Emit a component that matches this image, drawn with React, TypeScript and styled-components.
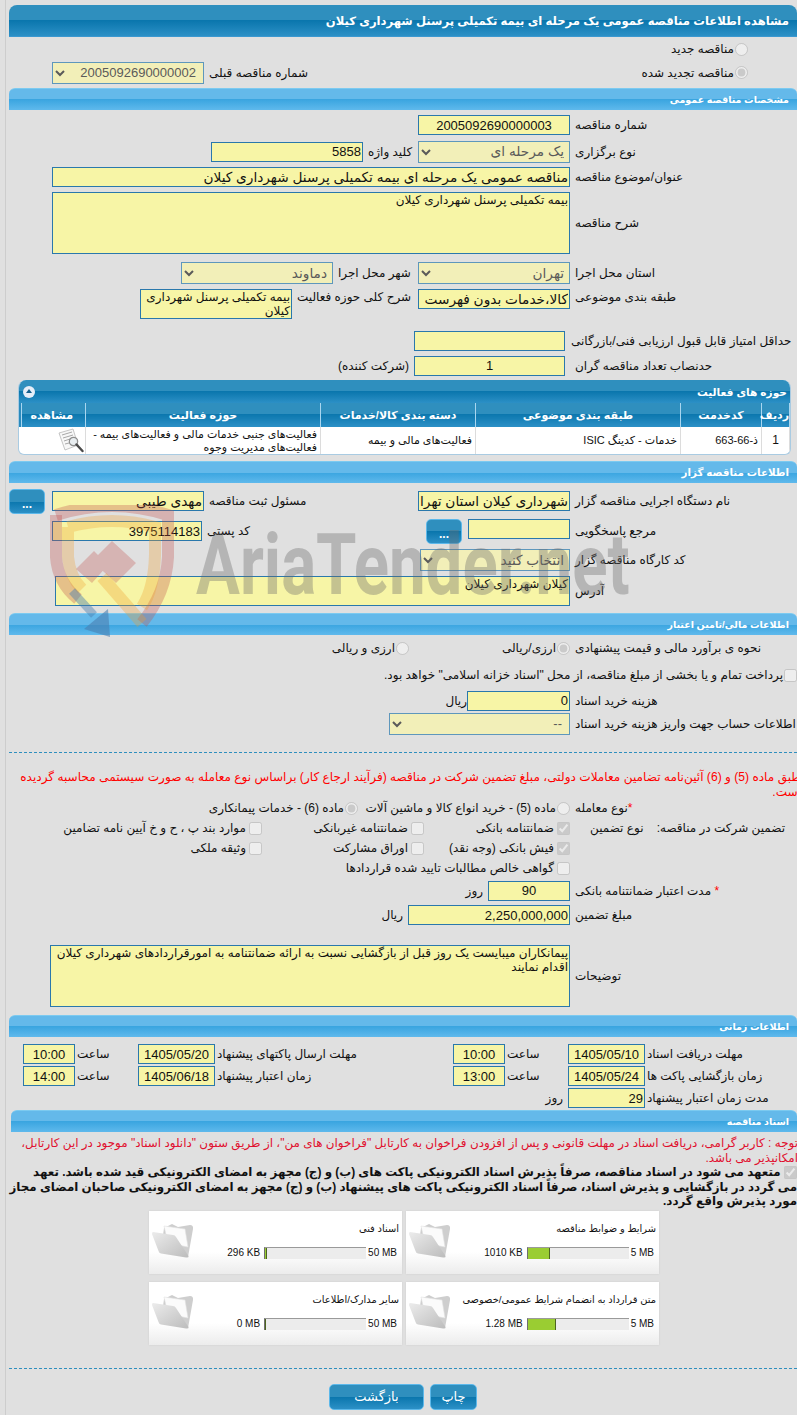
import { FC, ReactNode } from 'react';
import styled, { createGlobalStyle } from 'styled-components';

const FONT = '"Liberation Sans", "DejaVu Sans", sans-serif';
const INPUT_BORDER = '#2a78ac';
const INPUT_BG = '#f7f5a6';
const SELECT_BG = '#f2efb8';

const GlobalStyle = createGlobalStyle`
  html, body {
    margin: 0;
    background: #e0e0e0;
    font-family: ${FONT};
    font-size: 12px;
    color: #111;
  }
`;

const files = [
  { title: 'شرایط و ضوابط مناقصه', used: '1010 KB', total: '5 MB', pct: 21 },
  { title: 'اسناد فنی', used: '296 KB', total: '50 MB', pct: 1 },
  { title: 'متن قرارداد به انضمام شرایط عمومی/خصوصی', used: '1.28 MB', total: '5 MB', pct: 27 },
  { title: 'سایر مدارک/اطلاعات', used: '0 MB', total: '50 MB', pct: 0 },
];

const FolderIcon: FC = () => (
  <svg width="42" height="36" viewBox="0 0 42 36">
    <defs>
      <linearGradient id="flap" x1="0" y1="0" x2="1" y2="1">
        <stop offset="0" stopColor="#ececec" />
        <stop offset="1" stopColor="#bcbcbc" />
      </linearGradient>
    </defs>
    <path d="M12 5 L20 1 L26 4 L38 2 Q41.500 2 41 6 L36 34 L10 20 Z" fill="#cecece" />
    <path d="M12 3 L33 6 L36 24 L16 20 Z" fill="#fbfbfb" stroke="#e2e2e2" strokeWidth="0.6" />
    <path d="M1 9 L21 12 Q23 12 24 14 L36.500 33 Q37 35 34 34.500 L9 30.500 Q7 30 6.500 28 L0 11 Q0 9 1 9 Z" fill="url(#flap)" />
  </svg>
);

const ReviewIcon: FC = () => (
  <svg width="26" height="25" viewBox="0 0 26 25">
    <path d="M1 5 L15 1 L20 17 L7 22 Z" fill="#f7f7f7" stroke="#b8b8b8" strokeWidth="0.8" />
    <path d="M4 7 L14 4 M5 10 L15 7 M6 13 L12 11 M7 16 L11 15" stroke="#a8a8a8" strokeWidth="1" />
    <circle cx="15.500" cy="13.500" r="4.200" fill="#e4eaee" fillOpacity="0.8" stroke="#8e8e8e" strokeWidth="1.200" />
    <path d="M18.500 16.500 L24.500 23" stroke="#4a4a4a" strokeWidth="2.400" strokeLinecap="round" />
  </svg>
);

const WatermarkLogo: FC = () => (
  <svg width="130" height="135" viewBox="0 0 130 135">
    <path d="M6 10 Q62 -8 118 10 L118 52 Q116 88 92 118" fill="none" stroke="#c0504d" strokeOpacity="0.32" strokeWidth="12" />
    <path d="M6 10 L6 52 Q8 78 28 94" fill="none" stroke="#c0504d" strokeOpacity="0.32" strokeWidth="12" />
    <path d="M18 22 L18 52 Q20 72 32 84 M18 22 Q62 10 105 22 L105 50 Q104 84 92 102" fill="none" stroke="#f0a030" strokeOpacity="0.3" strokeWidth="12" />
    <path d="M62 36 L86 58 L66 78 L42 56 Z M26 64 L44 46 L58 60 L42 78 Z" fill="#c0504d" fillOpacity="0.3" />
    <path d="M52 72 L92 118" stroke="#f0a030" strokeOpacity="0.32" strokeWidth="12" />
    <path d="M22 86 L44 110" stroke="#4a7fb0" strokeOpacity="0.45" strokeWidth="8" />
    <path d="M58 104 L60 132 L34 124 Z" fill="#4a7fb0" fillOpacity="0.6" />
  </svg>
);

const Field: FC<{ label: ReactNode; w?: number; children: ReactNode }> = ({ label, w = 222, children }) => (
  <>
    <Label $w={w}>{label}</Label>
    {children}
  </>
);

const Check: FC<{ checked?: boolean; children: ReactNode; w?: number; gap?: number }> = ({ checked, children, w, gap }) => (
  <CheckItem $w={w} $gap={gap}>
    <input type="checkbox" disabled defaultChecked={checked} />
    <span>{children}</span>
  </CheckItem>
);

const Choice: FC<{ name: string; checked?: boolean; children: ReactNode; w?: number }> = ({ name, checked, children, w }) => (
  <RadioItem $w={w}>
    <input type="radio" name={name} disabled defaultChecked={checked} />
    <span>{children}</span>
  </RadioItem>
);

const FileCard: FC<{ title: string; used: string; total: string; pct: number }> = ({ title, used, total, pct }) => (
  <Card>
    <CardBody>
      <CardTitle>{title}</CardTitle>
      <Meter>
        <MeterText>{total}</MeterText>
        <MeterTrack>
          <MeterFill style={{ width: `${pct}%` }} />
        </MeterTrack>
        <MeterText>{used}</MeterText>
      </Meter>
    </CardBody>
    <FolderSlot>
      <FolderIcon />
    </FolderSlot>
  </Card>
);

export default function App() {
  return (
    <Page>
      <GlobalStyle />
      <Watermark>
        <WatermarkLogo />
        <WatermarkText>AriaTender.net</WatermarkText>
      </Watermark>

      <PageTitle>مشاهده اطلاعات مناقصه عمومی یک مرحله ای بیمه تکمیلی پرسنل شهرداری کیلان</PageTitle>

      <Row $h={24} $pr={49}>
        <Choice name="renew">مناقصه جدید</Choice>
      </Row>
      <Row $h={23} $pr={49}>
        <Choice name="renew" checked w={439}>مناقصه تجدید شده</Choice>
        <Label $w={100}>شماره مناقصه قبلی</Label>
        <Select $w={152} $num defaultValue="a">
          <option value="a">2005092690000002</option>
        </Select>
      </Row>

      <Bar $mt={4}>مشخصات مناقصه عمومی</Bar>

      <Row $h={30}>
        <Field label="شماره مناقصه">
          <TextInput $w={152} $num $center readOnly defaultValue="2005092690000003" />
        </Field>
      </Row>
      <Row $h={23}>
        <Field label="نوع برگزاری">
          <Select $w={152} defaultValue="a">
            <option value="a">یک مرحله ای</option>
          </Select>
        </Field>
        <Field label="کلید واژه" w={50}>
          <TextInput $w={152} $num readOnly defaultValue="5858" />
        </Field>
      </Row>
      <Row $h={28}>
        <Field label="عنوان/موضوع مناقصه">
          <TextInput $w={518} readOnly defaultValue="مناقصه عمومی یک مرحله ای بیمه تکمیلی پرسنل شهرداری کیلان" />
        </Field>
      </Row>
      <Row $h={64}>
        <Field label="شرح مناقصه">
          <TextArea $w={518} $h={62} readOnly defaultValue="بیمه تکمیلی پرسنل شهرداری کیلان" />
        </Field>
      </Row>
      <Row $h={34} $pt={2}>
        <Field label="استان محل اجرا">
          <Select $w={152} defaultValue="a">
            <option value="a">تهران</option>
          </Select>
        </Field>
        <Field label="شهر محل اجرا" w={80}>
          <Select $w={152} defaultValue="a">
            <option value="a">دماوند</option>
          </Select>
        </Field>
      </Row>
      <Row $h={38} $top>
        <Field label="طبقه بندی موضوعی">
          <TextInput $w={152} readOnly defaultValue="کالا،خدمات بدون فهرست بها" />
        </Field>
        <Field label="شرح کلی حوزه فعالیت" w={121}>
          <TextArea $w={152} $h={30} readOnly defaultValue="بیمه تکمیلی پرسنل شهرداری کیلان" />
        </Field>
      </Row>
      <Row $h={27}>
        <Label $w={226} $ml={6}>حداقل امتیاز قابل قبول ارزیابی فنی/بازرگانی</Label>
        <TextInput $w={151} readOnly />
      </Row>
      <Row $h={23}>
        <Label $w={222} $ml={10}>حدنصاب تعداد مناقصه گران</Label>
        <TextInput $w={151} $num $center readOnly defaultValue="1" />
        <Suffix>(شرکت کننده)</Suffix>
      </Row>

      <Panel>
        <PanelBar>
          <span>حوزه های فعالیت</span>
          <Toggle />
        </PanelBar>
        <DataTable>
          <colgroup>
            <col width={28} />
            <col width={81} />
            <col width={205} />
            <col width={155} />
            <col width={235} />
            <col width={67} />
          </colgroup>
          <thead>
            <tr>
              <th>ردیف</th>
              <th>کدخدمت</th>
              <th>طبقه بندی موضوعی</th>
              <th>دسته بندی کالا/خدمات</th>
              <th>حوزه فعالیت</th>
              <th>مشاهده</th>
            </tr>
          </thead>
          <tbody>
            <tr>
              <CenterCell>1</CenterCell>
              <td>ذ-66-663</td>
              <td>خدمات - کدینگ ISIC</td>
              <td>فعالیت‌های مالی و بیمه</td>
              <td>فعالیت‌های جنبی خدمات مالی و فعالیت‌های بیمه - فعالیت‌های مدیریت وجوه</td>
              <IconCell>
                <ReviewIcon />
              </IconCell>
            </tr>
          </tbody>
        </DataTable>
      </Panel>

      <Bar $mt={6} $fs={10.300}>اطلاعات مناقصه گزار</Bar>

      <Row $h={34} $pt={2}>
        <Field label="نام دستگاه اجرایی مناقصه گزار">
          <TextInput $w={152} readOnly defaultValue="شهرداری کیلان استان تهران" />
        </Field>
        <Field label="مسئول ثبت مناقصه" w={209}>
          <TextInput $w={152} readOnly defaultValue="مهدی طیبی" />
        </Field>
        <SmallButton $mr={7}>...</SmallButton>
      </Row>
      <Row $h={28}>
        <Field label="مرجع پاسخگویی">
          <RefInput $w={102} readOnly />
        </Field>
        <SmallButton $mr={6}>...</SmallButton>
        <Label $w={219}>کد پستی</Label>
        <TextInput $w={150} $num readOnly defaultValue="3975114183" />
      </Row>
      <Row $h={30}>
        <Field label="کد کارگاه مناقصه گزار">
          <Select $w={150} defaultValue="a">
            <option value="a">انتخاب کنید</option>
          </Select>
        </Field>
      </Row>
      <Row $h={32}>
        <Field label="آدرس">
          <TextArea $w={515} $h={30} readOnly defaultValue="کیلان شهرداری کیلان" />
        </Field>
      </Row>

      <Bar $mt={6}>اطلاعات مالی/تامین اعتبار</Bar>

      <Row $h={26}>
        <Field label="نحوه ی برآورد مالی و قیمت پیشنهادی">
          <Choice name="estimate" checked w={161}>ارزی/ریالی</Choice>
          <Choice name="estimate">ارزی و ریالی</Choice>
        </Field>
      </Row>
      <Row $h={28}>
        <Check gap={1}>پرداخت تمام و یا بخشی از مبلغ مناقصه، از محل "اسناد خزانه اسلامی" خواهد بود.</Check>
      </Row>
      <Row $h={23}>
        <Field label="هزینه خرید اسناد">
          <TextInput $w={103} $num readOnly defaultValue="0" />
        </Field>
        <Suffix $gap={0}>ریال</Suffix>
      </Row>
      <Row $h={23}>
        <Field label="اطلاعات حساب جهت واریز هزینه خرید اسناد">
          <Select $w={181} $num defaultValue="a">
            <option value="a">--</option>
          </Select>
        </Field>
      </Row>

      <Divider $mt={17} />

      <RedNote $mt={17} $mr={-4} $fs={12.100}>
        <Line>طبق ماده (5) و (6) آئین‌نامه تضامین معاملات دولتی، مبلغ تضمین شرکت در مناقصه (فرآیند ارجاع کار) براساس نوع معامله به صورت سیستمی محاسبه گردیده</Line>
        <Line>است.</Line>
      </RedNote>

      <Row $h={20}>
        <Field label={<><Star>*</Star><span>نوع معامله</span></>}>
          <Choice name="deal" w={212}>ماده (5) - خرید انواع کالا و ماشین آلات</Choice>
          <Choice name="deal" checked>ماده (6) - خدمات پیمانکاری</Choice>
        </Field>
      </Row>
      <Row $h={20}>
        <GuaranteeHead>
          <span>تضمین شرکت در مناقصه:</span>
          <span>نوع تضمین</span>
        </GuaranteeHead>
        <Check checked w={146}>ضمانتنامه بانکی</Check>
        <Check w={162}>ضمانتنامه غیربانکی</Check>
        <Check>موارد بند پ ، ح و خ آیین نامه تضامین</Check>
      </Row>
      <Row $h={20}>
        <GuaranteeHead />
        <Check checked w={146}>فیش بانکی (وجه نقد)</Check>
        <Check w={162}>اوراق مشارکت</Check>
        <Check>وثیقه ملکی</Check>
      </Row>
      <Row $h={20}>
        <GuaranteeHead />
        <Check>گواهی خالص مطالبات تایید شده قراردادها</Check>
      </Row>
      <Row $h={25}>
        <Field label={<><Star>*</Star> <span>مدت اعتبار ضمانتنامه بانکی</span></>}>
          <TextInput $w={82} $num $center readOnly defaultValue="90" />
        </Field>
        <Suffix>روز</Suffix>
      </Row>
      <Row $h={24}>
        <Field label="مبلغ تضمین">
          <TextInput $w={162} $num readOnly defaultValue="2,250,000,000" />
        </Field>
        <Suffix>ریال</Suffix>
      </Row>
      <Row $h={88} $pt={18} $pb={8}>
        <Field label="توضیحات">
          <TextArea $w={520} $h={62} readOnly defaultValue="پیمانکاران میبایست یک روز قبل از بازگشایی نسبت به ارائه ضمانتنامه به امورقراردادهای شهرداری کیلان اقدام نمایند" />
        </Field>
      </Row>

      <Bar>اطلاعات زمانی</Bar>

      <TimeRows>
        <Row $h={22}>
          <Label $w={150} $ml={2}>مهلت دریافت اسناد</Label>
          <TextInput $w={77} $num $center readOnly defaultValue="1405/05/10" />
          <Label $w={61} $ml={2}>ساعت</Label>
          <TextInput $w={52} $num $center readOnly defaultValue="10:00" />
          <Label $w={236} $ml={2}>مهلت ارسال پاکتهای پیشنهاد</Label>
          <TextInput $w={77} $num $center readOnly defaultValue="1405/05/20" />
          <Label $w={61} $ml={2}>ساعت</Label>
          <TextInput $w={52} $num $center readOnly defaultValue="10:00" />
        </Row>
        <Row $h={22}>
          <Label $w={150} $ml={2}>زمان بازگشایی پاکت ها</Label>
          <TextInput $w={77} $num $center readOnly defaultValue="1405/05/24" />
          <Label $w={61} $ml={2}>ساعت</Label>
          <TextInput $w={52} $num $center readOnly defaultValue="13:00" />
          <Label $w={236} $ml={2}>زمان اعتبار پیشنهاد</Label>
          <TextInput $w={77} $num $center readOnly defaultValue="1405/06/18" />
          <Label $w={61} $ml={2}>ساعت</Label>
          <TextInput $w={52} $num $center readOnly defaultValue="14:00" />
        </Row>
        <Row $h={22}>
          <Label $w={150} $ml={2}>مدت زمان اعتبار پیشنهاد</Label>
          <TextInput $w={77} $num readOnly defaultValue="29" />
          <Suffix>روز</Suffix>
        </Row>
      </TimeRows>

      <Bar $mt={1} $ml={2}>اسناد مناقصه</Bar>

      <RedNote $mt={4} $mr={-1} $fs={11.950} $dark>
        <Line>توجه : کاربر گرامی، دریافت اسناد در مهلت قانونی و پس از افزودن فراخوان به کارتابل "فراخوان های من"، از طریق ستون "دانلود اسناد" موجود در این کارتابل،</Line>
        <Line>امکانپذیر می باشد.</Line>
      </RedNote>
      <Pledge>
        <Line>
          <input type="checkbox" disabled defaultChecked /> متعهد می شود در اسناد مناقصه، صرفاً پذیرش اسناد الکترونیکی پاکت های (ب) و (ج) مجهز به امضای الکترونیکی قید شده باشد. تعهد
        </Line>
        <Line>می گردد در بازگشایی و پذیرش اسناد، صرفاً اسناد الکترونیکی پاکت های پیشنهاد (ب) و (ج) مجهز به امضای الکترونیکی صاحبان امضای مجاز</Line>
        <Line>مورد پذیرش واقع گردد.</Line>
      </Pledge>

      <CardGrid>
        {files.map((file) => (
          <FileCard key={file.title} {...file} />
        ))}
      </CardGrid>

      <Divider $mt={23} />

      <Actions>
        <ActionButton $w={47}>چاپ</ActionButton>
        <ActionButton $w={95}>بازگشت</ActionButton>
      </Actions>
    </Page>
  );
}

const Page = styled.div`
  position: relative;
  direction: rtl;
  box-sizing: border-box;
  width: 792px;
  min-height: 1415px;
  margin-left: 5px;
  padding: 5px 0 0 3px;
  border-left: 1px solid #cdcdcd;
  overflow: hidden;

  input[type='radio'],
  input[type='checkbox'] {
    flex-shrink: 0;
    margin: 0;
  }
`;

const Watermark = styled.div`
  position: absolute;
  left: 44px;
  top: 505px;
  display: flex;
  direction: ltr;
  pointer-events: none;
  z-index: 2;
`;

const WatermarkText = styled.span`
  margin: 10px 0 0 16px;
  font: 700 86px/100px Roboto, sans-serif;
  color: rgba(105, 105, 105, 0.36);
  transform: scaleX(0.76);
  transform-origin: left center;
  white-space: nowrap;
`;

const PageTitle = styled.div`
  box-sizing: border-box;
  height: 32px;
  padding: 0 8px;
  line-height: 31px;
  border-radius: 8px 8px 0 0;
  border-bottom: 1px solid #3a98d0;
  background: linear-gradient(#2f8fbe 0, #2f8fbe 50%, #0a76ad 50%, #2c90c6 100%);
  color: #fff;
  font-weight: 700;
  font-size: 11.600px;
  white-space: nowrap;
`;

const Bar = styled.div<{ $mt?: number; $ml?: number; $fs?: number }>`
  box-sizing: border-box;
  height: 22px;
  margin-top: ${({ $mt }) => $mt ?? 0}px;
  margin-left: ${({ $ml }) => $ml ?? 0}px;
  padding: 0 8px;
  line-height: 21px;
  border-radius: 6px 6px 0 0;
  border-top: 1px solid #7ccaf0;
  background: linear-gradient(#64b9ea 0, #64b9ea 50%, #3aa5e0 50%, #5fb9ec 100%);
  color: #fff;
  font-weight: 700;
  font-size: ${({ $fs }) => $fs ?? 9.500}px;
`;

const Row = styled.div<{ $h: number; $pt?: number; $pb?: number; $pr?: number; $top?: boolean }>`
  box-sizing: border-box;
  display: flex;
  align-items: ${({ $top }) => ($top ? 'flex-start' : 'center')};
  height: ${({ $h }) => $h}px;
  padding: ${({ $pt }) => $pt ?? 0}px ${({ $pr }) => $pr ?? 0}px ${({ $pb }) => $pb ?? 0}px 0;
`;

const Label = styled.label<{ $w: number; $ml?: number }>`
  flex-shrink: 0;
  width: ${({ $w }) => $w}px;
  margin-left: ${({ $ml }) => $ml ?? 5}px;
  line-height: 16px;
  text-align: left;
  white-space: nowrap;
`;

const Star = styled.span`
  color: #f00;
`;

const Suffix = styled.span<{ $gap?: number }>`
  margin-right: ${({ $gap }) => $gap ?? 5}px;
  white-space: nowrap;
`;

const TextInput = styled.input<{ $w: number; $center?: boolean; $num?: boolean }>`
  box-sizing: border-box;
  flex-shrink: 0;
  width: ${({ $w }) => $w}px;
  height: 20px;
  padding: 0 1px;
  border: 1px solid ${INPUT_BORDER};
  border-radius: 0;
  outline: none;
  background: ${INPUT_BG};
  color: #111;
  font: ${({ $num }) => ($num ? 13 : 13.700)}px ${FONT};
  text-align: ${({ $center }) => ($center ? 'center' : 'right')};
`;

const RefInput = styled(TextInput)`
  margin-bottom: 4px;
`;

const TextArea = styled.textarea<{ $w: number; $h: number }>`
  box-sizing: border-box;
  flex-shrink: 0;
  display: block;
  width: ${({ $w }) => $w}px;
  height: ${({ $h }) => $h}px;
  padding: 0 1px;
  border: 1px solid ${INPUT_BORDER};
  border-radius: 0;
  outline: none;
  resize: none;
  overflow: hidden;
  background: ${INPUT_BG};
  color: #111;
  font: 12px/14px ${FONT};
`;

const Select = styled.select<{ $w: number; $num?: boolean }>`
  box-sizing: border-box;
  flex-shrink: 0;
  width: ${({ $w }) => $w}px;
  height: 22px;
  padding: 0 ${({ $num }) => ($num ? 3 : 1)}px 0 3px;
  border: 1px solid #5e97bc;
  border-radius: 0;
  outline: none;
  background-color: ${SELECT_BG};
  color: #5a5a5a;
  font: ${({ $num }) => ($num ? 13 : 13.700)}px ${FONT};
`;

const RadioItem = styled.label<{ $w?: number }>`
  display: flex;
  flex-shrink: 0;
  align-items: center;
  gap: 1px;
  width: ${({ $w }) => ($w ? `${$w}px` : 'auto')};
  white-space: nowrap;
`;

const CheckItem = styled.label<{ $w?: number; $gap?: number }>`
  display: flex;
  flex-shrink: 0;
  align-items: center;
  gap: ${({ $gap }) => $gap ?? 3}px;
  width: ${({ $w }) => ($w ? `${$w}px` : 'auto')};
  white-space: nowrap;
`;

const GuaranteeHead = styled.div`
  box-sizing: border-box;
  display: flex;
  flex-shrink: 0;
  justify-content: space-between;
  width: 222px;
  margin-left: 5px;
  padding: 0 12px 0 15px;
  white-space: nowrap;
`;

const Panel = styled.div`
  box-sizing: border-box;
  width: 773px;
  height: 75px;
  margin: 3px 6px 0 0;
  border: 1px solid #a9cbe2;
  border-top: 0;
  border-radius: 8px 8px 6px 6px;
  overflow: hidden;
  background: #fff;
`;

const PanelBar = styled.div`
  display: flex;
  align-items: center;
  justify-content: space-between;
  height: 23px;
  padding: 0 3px 0 4px;
  background: linear-gradient(#2f8fbe 0, #2f8fbe 50%, #0a76ad 50%, #2c90c6 100%);
  color: #fff;
  font-weight: 700;
  font-size: 10.600px;
`;

const Toggle = styled.span`
  position: relative;
  width: 12px;
  height: 12px;
  border-radius: 50%;
  background: #e6eef8;

  &::after {
    content: '';
    position: absolute;
    left: 3px;
    top: 3px;
    border: 3px solid transparent;
    border-top: 0;
    border-bottom: 4px solid #15608e;
  }
`;

const DataTable = styled.table`
  width: 100%;
  border-collapse: collapse;
  table-layout: fixed;
  font-size: 11px;

  th {
    height: 24px;
    padding: 0;
    border-left: 1px solid #a8d6f0;
    border-right: 1px solid #a8d6f0;
    background: linear-gradient(#2f8fbe 0, #2f8fbe 45%, #0a76ad 45%, #2c90c6 100%);
    color: #fff;
    font-size: 11px;
    font-weight: 700;
  }

  th:last-child {
    border-left: 0;
    box-shadow: inset 2px 0 0 #2a8abd, inset 3px 0 0 #a8d6f0;
  }

  td {
    height: 27px;
    padding: 0 3px;
    border-left: 1px solid #dcdcdc;
    border-right: 1px solid #dcdcdc;
    line-height: 13px;
    text-align: right;
  }
`;

const CenterCell = styled.td`
  && {
    text-align: center;
    font-size: 12px;
  }
`;

const IconCell = styled.td`
  && {
    padding: 0 0 0 2px;
  }

  svg {
    display: block;
    margin-right: 1px;
  }
`;

const SmallButton = styled.button<{ $mr: number }>`
  flex-shrink: 0;
  width: 36px;
  height: 25px;
  margin-right: ${({ $mr }) => $mr}px;
  padding: 6px 0 0;
  border: 1px solid #5cb8ea;
  border-radius: 5px;
  background: linear-gradient(#2f8fbe 0, #2f8fbe 50%, #0a76ad 50%, #2c90c6 100%);
  color: #fff;
  font: 700 12px/12px ${FONT};
`;

const Divider = styled.div<{ $mt: number }>`
  margin-top: ${({ $mt }) => $mt}px;
  border-top: 1px dashed #2f8fbe;
`;

const RedNote = styled.div<{ $mt: number; $mr: number; $fs: number; $dark?: boolean }>`
  height: 28px;
  margin: ${({ $mt }) => $mt}px ${({ $mr }) => $mr}px 0 0;
  color: ${({ $dark }) => ($dark ? '#e0102f' : '#f00')};
  font-size: ${({ $fs }) => $fs}px;
  line-height: 14px;
`;

const Line = styled.div`
  height: 14.500px;
  line-height: 14.500px;
  white-space: nowrap;
`;

const TimeRows = styled.div`
  padding-top: 6px;
`;

const Pledge = styled.div`
  margin-top: 1px;
  font-weight: 700;
  font-size: 11.850px;

  input {
    vertical-align: middle;
  }
`;

const CardGrid = styled.div`
  display: grid;
  grid-template-columns: 253px 253px;
  grid-auto-rows: 63px;
  gap: 8px 4px;
  margin: 2px 138px 0 0;
`;

const Card = styled.div`
  display: flex;
  justify-content: space-between;
  box-shadow: 0 0 2px rgba(0, 0, 0, 0.08);
  background: linear-gradient(#fff 0, #fff 65%, #ececec 100%);
`;

const CardBody = styled.div`
  box-sizing: border-box;
  width: 212px;
  padding: 11px 3px 0 0;
`;

const CardTitle = styled.div`
  height: 14px;
  font-size: 9.900px;
  line-height: 14px;
  white-space: nowrap;
`;

const Meter = styled.div`
  display: flex;
  align-items: center;
  gap: 2px;
  margin-top: 11px;
`;

const MeterText = styled.span`
  box-sizing: border-box;
  min-width: 24px;
  padding: 0 2px 0 0;
  direction: ltr;
  font-size: 10px;
  text-align: right;
  white-space: nowrap;
`;

const MeterTrack = styled.div`
  box-sizing: border-box;
  display: flex;
  direction: ltr;
  width: 102px;
  height: 12px;
  border-top: 1px solid #9a9a9a;
  border-left: 1px solid #6f6f6f;
  background: #ececec;
`;

const MeterFill = styled.div`
  background: #9acd32;
  border-right: 1px solid #4c6420;
`;

const FolderSlot = styled.div`
  margin: 12px 0 0 3px;
`;

const Actions = styled.div`
  display: flex;
  gap: 6px;
  margin: 15px 320px 0 0;
`;

const ActionButton = styled.button<{ $w: number }>`
  width: ${({ $w }) => $w}px;
  height: 26px;
  border: 1px solid #5cb8ea;
  border-radius: 5px;
  background: linear-gradient(#2f8fbe 0, #2f8fbe 50%, #0a76ad 50%, #2c90c6 100%);
  color: #fff;
  font: 13px ${FONT};
`;
